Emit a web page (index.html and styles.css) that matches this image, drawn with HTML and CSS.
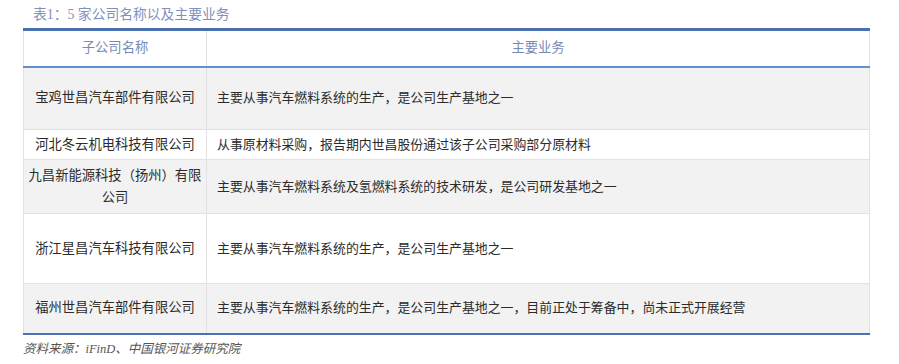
FILE: index.html
```html
<!DOCTYPE html>
<html lang="zh-CN">
<head>
    <meta charset="UTF-8" />
    <title>5 家公司名称以及主要业务</title>
    <link rel="stylesheet" href="styles.css">
</head>
<body>
    <div class="report">
        <p class="caption">表1：5 家公司名称以及主要业务</p>
        <table class="biz-table">
            <thead>
                <tr>
                    <th class="name-col">子公司名称</th>
                    <th>主要业务</th>
                </tr>
            </thead>
            <tbody>
                <tr class="r1">
                    <td class="name-col">宝鸡世昌汽车部件有限公司</td>
                    <td>主要从事汽车燃料系统的生产，是公司生产基地之一</td>
                </tr>
                <tr class="r2">
                    <td class="name-col">河北冬云机电科技有限公司</td>
                    <td>从事原材料采购，报告期内世昌股份通过该子公司采购部分原材料</td>
                </tr>
                <tr class="r3">
                    <td class="name-col">九昌新能源科技（扬州）有限公司</td>
                    <td>主要从事汽车燃料系统及氢燃料系统的技术研发，是公司研发基地之一</td>
                </tr>
                <tr class="r4">
                    <td class="name-col">浙江星昌汽车科技有限公司</td>
                    <td>主要从事汽车燃料系统的生产，是公司生产基地之一</td>
                </tr>
                <tr class="r5">
                    <td class="name-col">福州世昌汽车部件有限公司</td>
                    <td>主要从事汽车燃料系统的生产，是公司生产基地之一，目前正处于筹备中，尚未正式开展经营</td>
                </tr>
            </tbody>
        </table>
        <p class="source">资料来源：iFinD、中国银河证券研究院</p>
    </div>
</body>
</html>
```

FILE: styles.css
```css
* { box-sizing: border-box; margin: 0; padding: 0; }

body {
    font-family: "Liberation Serif", "Noto Sans CJK SC", serif;
    background: #fff;
    color: #333;
}

.report {
    padding: 5px 0 0 23px;
    width: 872px;
}

.caption {
    padding-left: 10px;
    font-size: 13.8px;
    line-height: 20px;
    height: 23px;
    color: #8191bb;
}

/* table with blue rules top and bottom */
.biz-table {
    width: 847px;
    border-collapse: collapse;
    border-top: 3px solid #4a70b0;
    border-bottom: 2px solid #4a70b5;
    font-size: 12.9px;
    line-height: 22px;
}

.biz-table th,
.biz-table td {
    border-left: 1px solid #e2e2e2;
    border-right: 1px solid #e2e2e2;
    border-top: 1px solid #e2e2e2;
    vertical-align: middle;
}

.biz-table th {
    height: 37px;
    font-size: 13.3px;
    font-weight: normal;
    color: #7789b4;
    text-align: center;
    border-bottom: 2px solid #5f90d4;
}

.biz-table td {
    padding: 0 10px;
    color: #2b2b2b;
}

.biz-table .name-col {
    width: 183px;
    padding: 0 4px;
    font-size: 13.3px;
    text-align: center;
}

.r1, .r3, .r5 { background: #f2f2f2; }

.r1 { height: 63px; }
.r2 { height: 30px; }
.r3 { height: 54px; }
.r4 { height: 70px; }
.r5 { height: 50px; }

.source {
    margin-top: 4px;
    font-size: 12.5px;
    line-height: 20px;
    font-style: italic;
    color: #555;
}
```
